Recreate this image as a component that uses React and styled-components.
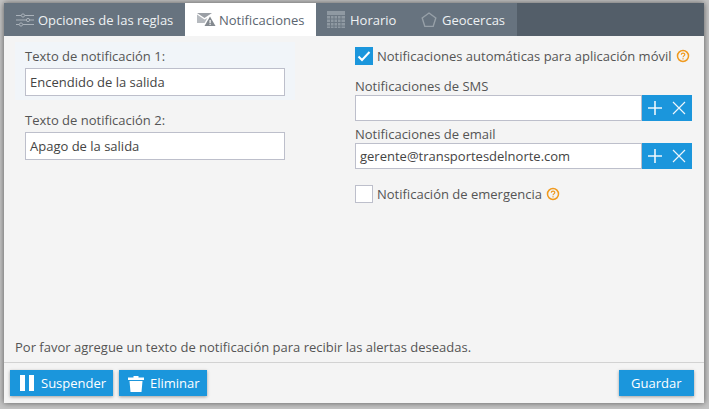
import React from 'react';
import styled, { createGlobalStyle } from 'styled-components';

const Global = createGlobalStyle`
  html, body { margin: 0; padding: 0; background: #c4c4c4; }
  body { font-family: "Open Sans", sans-serif; font-size: 13px; color: #555; width: 709px; height: 409px; overflow: hidden; }
  * { box-sizing: border-box; }
`;

const Page = styled.div`
  width: 709px;
  height: 409px;
  padding: 3px 5px 6px 4px;
`;
const Panel = styled.div`
  width: 700px;
  height: 400px;
  background: #f4f4f4;
  display: flex;
  flex-direction: column;
  box-shadow: 0 0 6px rgba(0,0,0,.55);
`;
const TabBar = styled.div`
  height: 33px;
  flex: none;
  background: #535e69;
  display: flex;
`;
const TabGroup = styled.div`
  display: flex;
  background: #67737f;
`;
const Tab = styled.div`
  display: flex;
  align-items: center;
  height: 33px;
  width: ${p => p.$w}px;
  padding-left: ${p => p.$pl}px;
  gap: ${p => p.$gap}px;
  font-size: 13px;
  background: ${p => (p.$active ? '#fff' : 'transparent')};
  color: ${p => (p.$active ? '#5b6570' : '#eef1f3')};
`;
const Body = styled.div`
  flex: 1;
  display: flex;
  position: relative;
`;
const LeftCol = styled.div`
  width: 351px;
  padding: 6px 0 0 11px;
  display: flex;
  flex-direction: column;
  gap: 6px;
`;
const LeftBox = styled.div`
  width: 280px;
  height: 58px;
  padding: 4px 10px 0;
  background: ${p => (p.$tint ? '#f1f5f9' : 'transparent')};
`;
const FieldLabel = styled.div`
  height: 20px;
  line-height: 20px;
  margin-bottom: 2px;
  font-size: 13px;
  color: #555;
`;
const TextBox = styled.div`
  height: ${p => p.$h}px;
  width: ${p => p.$w}px;
  border: 1px solid #bdbfcb;
  background: #fff;
  padding-left: 4px;
  font-size: 13px;
  line-height: ${p => p.$h - 2}px;
  color: #444;
  white-space: nowrap;
`;
const RightCol = styled.div`
  flex: 1;
  padding-top: 11px;
`;
const CheckRow = styled.div`
  display: flex;
  align-items: center;
  height: 18px;
  gap: 4px;
  margin-top: ${p => p.$mt || 0}px;
  font-size: 13px;
  color: #555;
`;
const Box = styled.div`
  width: 18px;
  height: 18px;
  display: flex;
  align-items: center;
  justify-content: center;
  background: ${p => (p.$on ? '#1b96dc' : '#fff')};
  border: ${p => (p.$on ? '0' : '1px solid #bdbfcb')};
`;
const Help = styled.svg`
  width: 14px;
  height: 14px;
`;
const Group = styled.div`
  margin-top: ${p => p.$mt}px;
`;
const GroupLabel = styled.div`
  height: 18px;
  line-height: 18px;
  font-size: 13px;
  color: #555;
`;
const InputRow = styled.div`
  display: flex;
  width: 337px;
`;
const ActionPair = styled.div`
  width: 50px;
  height: 26px;
  background: #1b96dc;
  display: flex;
  align-items: center;
  justify-content: space-around;
  padding: 0 1px;
`;
const Hint = styled.div`
  position: absolute;
  left: 11px;
  bottom: 6px;
  font-size: 13px;
  color: #555;
`;
const Footer = styled.div`
  height: 41px;
  flex: none;
  border-top: 1px solid #d2d2d2;
  padding: 7px 10px 0 6px;
  display: flex;
  gap: 6px;
`;
const Btn = styled.div`
  height: 26px;
  display: flex;
  align-items: center;
  gap: ${p => p.$gap || 0}px;
  width: ${p => p.$w}px;
  padding-left: ${p => p.$pl}px;
  margin-left: ${p => (p.$end ? 'auto' : 0)};
  background: #1b96dc;
  color: #fff;
  font-size: 13px;
  box-shadow: 0 1px 3px rgba(0,0,0,.35);
`;

const HelpIcon = () => (
  <Help viewBox="0 0 14 14">
    <circle cx="7" cy="7" r="5.5" fill="none" stroke="#f09a1f" strokeWidth="1.5" />
    <path d="M5.3 5.7c0-2.2 3.5-2.2 3.5-.1 0 1.3-1.8 1.3-1.8 2.7" fill="none" stroke="#f09a1f" strokeWidth="1.2" />
    <rect x="6.4" y="9.2" width="1.2" height="1.2" fill="#f09a1f" />
  </Help>
);

const Actions = () => (
  <ActionPair>
    <svg width="16" height="16" viewBox="0 0 16 16"><path d="M8 1v14M1 8h14" stroke="#fff" strokeWidth="1.6" opacity=".92" /></svg>
    <svg width="16" height="16" viewBox="0 0 16 16"><path d="M2 2l12 12M14 2L2 14" stroke="#fff" strokeWidth="1.2" opacity=".92" /></svg>
  </ActionPair>
);

export default function App() {
  return (
    <Page>
      <Global />
      <Panel>
        <TabBar>
          <TabGroup>
            <Tab $w={181} $pl={12} $gap={4}>
              <svg width="18" height="14" viewBox="0 0 18 14" fill="none" stroke="#aab2ba" strokeWidth="1">
                <path d="M0 2.5h5M9 2.5h9M0 7h10M14 7h4M0 11.5h3M7 11.5h11" />
                <circle cx="7" cy="2.5" r="1.6" />
                <circle cx="12" cy="7" r="1.6" />
                <circle cx="5" cy="11.5" r="1.6" />
              </svg>
              Opciones de las reglas
            </Tab>
            <Tab $active $w={131} $pl={12} $gap={3}>
              <svg width="19" height="14" viewBox="0 0 19 14">
                <path d="M0 0h15L7.5 5z" fill="#9a9fa5" />
                <path d="M0 1.5v8.5h7.5l3-5-3 1.5z" fill="#b6babf" />
                <path d="M13 3.5l5.5 9.5H7.5z" fill="#83898f" />
                <rect x="12.5" y="7" width="1.2" height="3" fill="#fff" />
                <rect x="12.5" y="10.7" width="1.2" height="1.2" fill="#fff" />
              </svg>
              Notificaciones
            </Tab>
            <Tab $w={101} $pl={11} $gap={5}>
              <svg width="18" height="17" viewBox="0 0 18 17">
                <rect width="18" height="17" fill="#8f99a2" />
                <path d="M0 4.5h18M0 8h18M0 11.5h18M0 15h18M3.5 4v13M7 4v13M10.5 4v13M14 4v13" stroke="#6d7883" strokeWidth="1" />
              </svg>
              Horario
            </Tab>
            <Tab $w={100} $pl={4} $gap={5}>
              <svg width="16" height="16" viewBox="0 0 16 16" fill="none" stroke="#97a0a8" strokeWidth="1.4">
                <path d="M8 1l6.8 5-2.6 8.4H3.8L1.2 6z" />
              </svg>
              Geocercas
            </Tab>
          </TabGroup>
        </TabBar>
        <Body>
          <LeftCol>
            <LeftBox $tint>
              <FieldLabel>Texto de notificación 1:</FieldLabel>
              <TextBox $w={260} $h={28}>Encendido de la salida</TextBox>
            </LeftBox>
            <LeftBox>
              <FieldLabel>Texto de notificación 2:</FieldLabel>
              <TextBox $w={260} $h={28}>Apago de la salida</TextBox>
            </LeftBox>
          </LeftCol>
          <RightCol>
            <CheckRow>
              <Box $on>
                <svg width="14" height="12" viewBox="0 0 14 12"><path d="M1.5 6.5l3.5 3.5 7.5-8" fill="none" stroke="#fff" strokeWidth="2" /></svg>
              </Box>
              Notificaciones automáticas para aplicación móvil
              <HelpIcon />
            </CheckRow>
            <Group $mt={12}>
              <GroupLabel>Notificaciones de SMS</GroupLabel>
              <InputRow>
                <TextBox $w={287} $h={26} />
                <Actions />
              </InputRow>
            </Group>
            <Group $mt={4}>
              <GroupLabel>Notificaciones de email</GroupLabel>
              <InputRow>
                <TextBox $w={287} $h={26}>gerente@transportesdelnorte.com</TextBox>
                <Actions />
              </InputRow>
            </Group>
            <CheckRow $mt={16}>
              <Box />
              Notificación de emergencia
              <HelpIcon />
            </CheckRow>
          </RightCol>
          <Hint>Por favor agregue un texto de notificación para recibir las alertas deseadas.</Hint>
        </Body>
        <Footer>
          <Btn $w={103} $pl={10} $gap={7}>
            <svg width="14" height="16" viewBox="0 0 14 16"><rect width="5" height="16" x="0" fill="#fff" /><rect width="5" height="16" x="9" fill="#fff" /></svg>
            Suspender
          </Btn>
          <Btn $w={88} $pl={9} $gap={6}>
            <svg width="16" height="17" viewBox="0 0 16 17" fill="#fff"><path d="M0 2.5h5.5V1h5v1.5H16V5H0zM1.5 6h13l-1 11h-11z" /></svg>
            Eliminar
          </Btn>
          <Btn $end $w={75} $pl={12}>Guardar</Btn>
        </Footer>
      </Panel>
    </Page>
  );
}
